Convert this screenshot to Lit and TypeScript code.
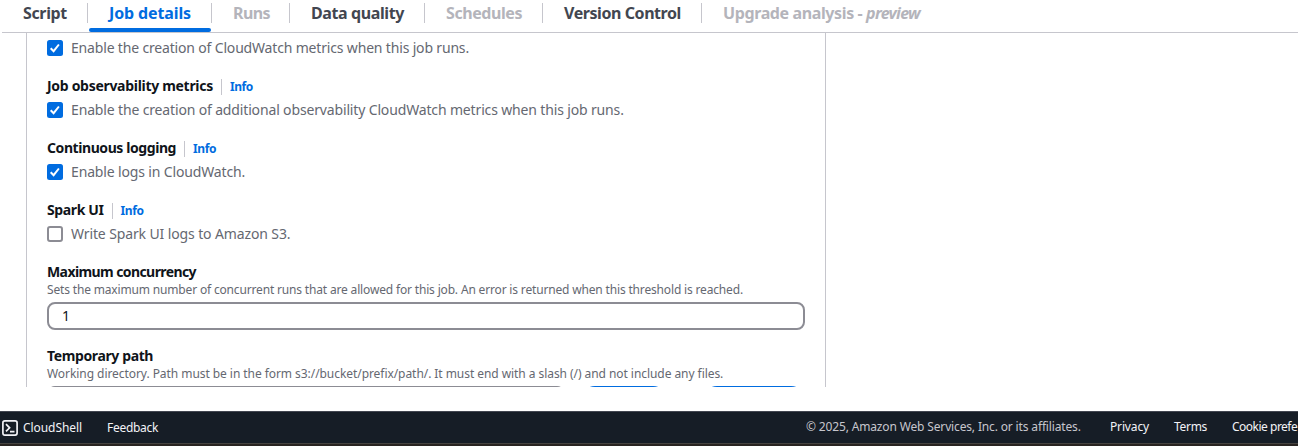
import { LitElement, html, css, svg } from "lit";

interface Label {
  text: string;
  ls: number;
}

interface Tab extends Label {
  width: number;
  state: "normal" | "active" | "disabled";
  note?: Label;
}

interface Toggle {
  title?: Label;
  option: Label;
  checked: boolean;
}

const TABS: Tab[] = [
  { text: "Script", ls: -0.35, width: 86, state: "normal" },
  { text: "Job details", ls: -0.12, width: 124, state: "active" },
  { text: "Runs", ls: -0.58, width: 78, state: "disabled" },
  { text: "Data quality", ls: -0.39, width: 135, state: "normal" },
  { text: "Schedules", ls: -0.43, width: 118, state: "disabled" },
  { text: "Version Control", ls: -0.43, width: 159, state: "normal" },
  {
    text: "Upgrade analysis - ",
    ls: -0.38,
    width: 240,
    state: "disabled",
    note: { text: "preview", ls: -0.7 },
  },
];

const TOGGLES: Toggle[] = [
  {
    option: { text: "Enable the creation of CloudWatch metrics when this job runs.", ls: -0.17 },
    checked: true,
  },
  {
    title: { text: "Job observability metrics", ls: -0.3 },
    option: {
      text: "Enable the creation of additional observability CloudWatch metrics when this job runs.",
      ls: -0.15,
    },
    checked: true,
  },
  {
    title: { text: "Continuous logging", ls: -0.42 },
    option: { text: "Enable logs in CloudWatch.", ls: -0.15 },
    checked: true,
  },
  {
    title: { text: "Spark UI", ls: -0.38 },
    option: { text: "Write Spark UI logs to Amazon S3.", ls: -0.12 },
    checked: false,
  },
];

const spaced = (l: Label) => html`<span class="text" style="letter-spacing:${l.ls}px">${l.text}</span>`;

class AppRoot extends LitElement {
  static styles = css`
    :host {
      display: flex;
      flex-direction: column;
      height: 446px;
      overflow: hidden;
      background: #fff;
      font-family: "Noto Sans", "Open Sans", sans-serif;
      font-size: 14px;
      line-height: 20px;
      color: #0f141a;
    }
    * {
      box-sizing: border-box;
    }
    .text {
      white-space: pre;
    }
    .tabs {
      display: flex;
      flex: none;
      height: 33px;
      margin-left: 2px;
      border-bottom: 1px solid #c6c6cd;
    }
    .tab {
      display: grid;
      grid-template-rows: 3px 20px 5px 4px;
      flex: none;
      color: #424650;
      font-size: 16px;
      font-weight: 700;
    }
    .tab-text {
      grid-row: 2;
      padding-left: 21px;
      border-right: 1px solid #c6c6cd;
      line-height: 21px;
      white-space: nowrap;
    }
    .tab:last-child .tab-text {
      border-right: 0;
    }
    .active {
      color: #006ce0;
    }
    .active::after {
      content: "";
      grid-row: 4;
      margin: 0 1px;
      border-radius: 2px;
      background: #006ce0;
    }
    .disabled {
      color: #b4b4bb;
    }
    .note {
      font-style: italic;
    }
    .panel {
      flex: none;
      width: 800px;
      height: 354px;
      margin-left: 26px;
      padding: 5px 20px 0;
      border: solid #c6c6cd;
      border-width: 0 1px;
      overflow: hidden;
    }
    .group {
      margin-bottom: 18px;
    }
    .heading {
      display: flex;
      align-items: center;
      height: 20px;
      margin-bottom: 4px;
      font-weight: 700;
    }
    .info {
      height: 16px;
      margin: 2px 0 0 8px;
      padding-left: 8px;
      border-left: 1px solid #c6c6cd;
      color: #006ce0;
      font-size: 12px;
      line-height: 16px;
    }
    .option {
      display: flex;
      align-items: center;
      gap: 8px;
      height: 20px;
      color: #656871;
    }
    .box {
      display: block;
      flex: none;
      width: 16px;
      height: 16px;
    }
    .field {
      margin-bottom: 16px;
    }
    .field .heading {
      margin: 0;
    }
    .hint {
      margin-bottom: 4px;
      color: #656871;
      font-size: 12px;
      line-height: 16px;
    }
    .input {
      height: 28px;
      padding-left: 13px;
      border: 2px solid #8c8c94;
      border-radius: 8px;
      line-height: 24px;
    }
    .path {
      display: grid;
      grid-template-columns: 518px 86px 102px;
    }
    .button {
      height: 28px;
      border: 2px solid #006ce0;
      border-radius: 16px;
    }
    .view {
      margin: 0 -16px 0 16px;
    }
    .browse {
      margin: 0 -52px 0 52px;
    }
    .footer {
      display: flex;
      align-items: center;
      flex: none;
      height: 32px;
      margin-top: 24px;
      padding-left: 2px;
      border-top: 1px solid #424650;
      background: #161d26;
      color: #f3f3f7;
      font-size: 12px;
      line-height: 16px;
    }
    .shell {
      flex: none;
      width: 16px;
      height: 16px;
      margin-right: 5px;
    }
    .feedback {
      margin-left: 25px;
    }
    .legal {
      display: grid;
      grid-template-columns: 304px 64px 58px 66px;
      flex: none;
      width: 492px;
      margin-left: auto;
      padding-bottom: 1px;
    }
    .copyright {
      color: #c6c6cd;
    }
    .strip {
      flex: 1;
      border-top: 1px solid #464340;
      background: #292421;
    }
  `;

  private box(checked: boolean) {
    return html`<svg class="box" viewBox="0 0 16 16">
      ${checked
        ? svg`<rect width="16" height="16" rx="2.5" fill="#006ce0"/>
            <path d="M3.7 8.3 6.6 11.2 11.9 4.5" fill="none" stroke="#fff" stroke-width="2"/>`
        : svg`<rect x="1" y="1" width="14" height="14" rx="2" fill="#fff" stroke="#8c8c94" stroke-width="2"/>`}
    </svg>`;
  }

  private heading(title: Label, info = false) {
    return html`<div class="heading">
      ${spaced(title)}
      ${info ? html`<span class="info">${spaced({ text: "Info", ls: -0.4 })}</span>` : ""}
    </div>`;
  }

  render() {
    return html`
      <nav class="tabs">
        ${TABS.map(
          (t) => html`<div class="tab ${t.state}" style="width:${t.width}px">
            <div class="tab-text">${spaced(t)}${t.note ? html`<span class="note">${spaced(t.note)}</span>` : ""}</div>
          </div>`
        )}
      </nav>
      <main class="panel">
        ${TOGGLES.map(
          (g) => html`<section class="group">
            ${g.title ? this.heading(g.title, true) : ""}
            <div class="option">${this.box(g.checked)}${spaced(g.option)}</div>
          </section>`
        )}
        <section class="field">
          ${this.heading({ text: "Maximum concurrency", ls: -0.59 })}
          <div class="hint">
            ${spaced({
              text: "Sets the maximum number of concurrent runs that are allowed for this job. An error is returned when this threshold is reached.",
              ls: -0.165,
            })}
          </div>
          <div class="input">1</div>
        </section>
        <section class="field">
          ${this.heading({ text: "Temporary path", ls: -0.38 })}
          <div class="hint">
            ${spaced({
              text: "Working directory. Path must be in the form s3://bucket/prefix/path/. It must end with a slash (/) and not include any files.",
              ls: -0.06,
            })}
          </div>
          <div class="path">
            <div class="input"></div>
            <div class="button view"></div>
            <div class="button browse"></div>
          </div>
        </section>
      </main>
      <footer class="footer">
        <svg class="shell" viewBox="0 0 16 16" fill="none" stroke="#f3f3f7" stroke-width="1.7">
          <rect x="0.9" y="0.9" width="14.2" height="14.2" rx="2" />
          <path d="M4 4.2 7.6 7.8 4 11.4M8 11.6h4.5" />
        </svg>
        ${spaced({ text: "CloudShell", ls: -0.07 })}
        <span class="feedback">${spaced({ text: "Feedback", ls: -0.3 })}</span>
        <div class="legal">
          <span class="copyright">
            ${spaced({ text: "© 2025, Amazon Web Services, Inc. or its affiliates.", ls: -0.15 })}
          </span>
          ${spaced({ text: "Privacy", ls: -0.15 })}
          ${spaced({ text: "Terms", ls: -0.31 })}
          ${spaced({ text: "Cookie prefe", ls: -0.5 })}
        </div>
      </footer>
      <div class="strip"></div>
    `;
  }
}

customElements.define("app-root", AppRoot);
